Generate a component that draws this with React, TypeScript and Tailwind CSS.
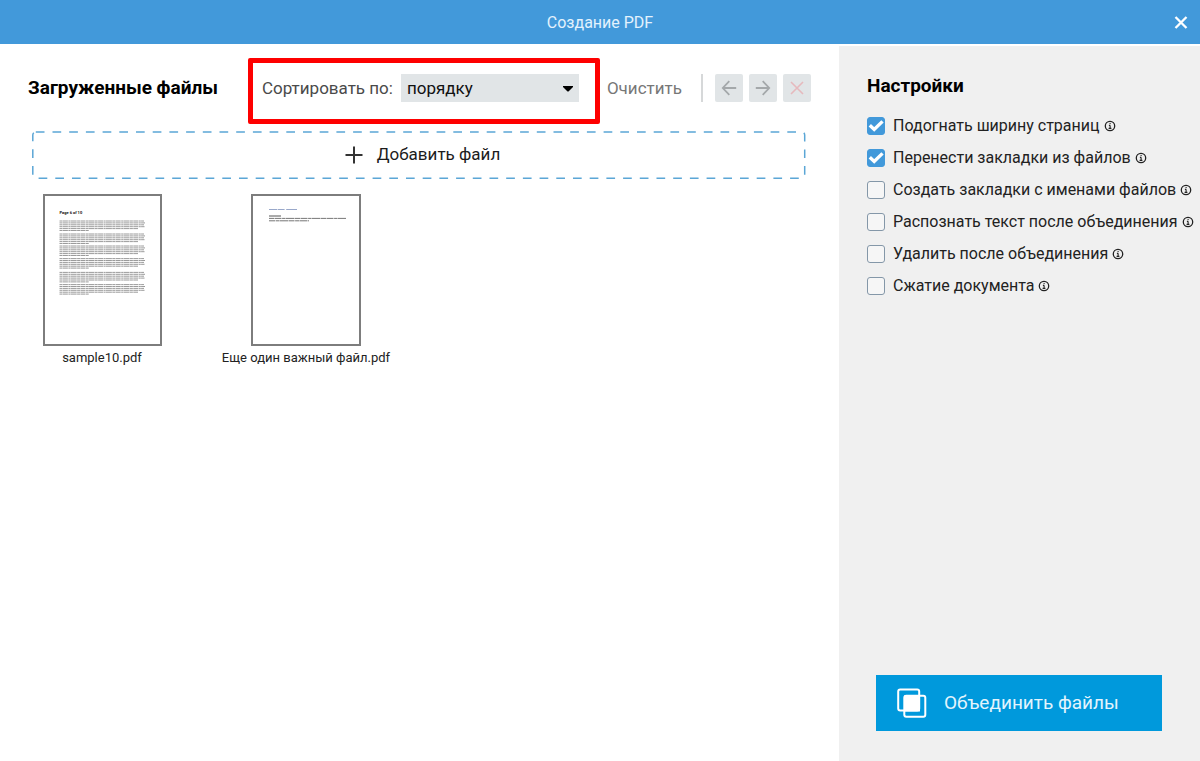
import { useState } from "react";

const SORT_OPTIONS = ["порядку", "имени", "размеру", "дате"];

const SETTINGS = [
  { id: "fit-width", label: "Подогнать ширину страниц", checked: true },
  { id: "move-bookmarks", label: "Перенести закладки из файлов", checked: true },
  { id: "name-bookmarks", label: "Создать закладки с именами файлов", checked: false },
  { id: "ocr", label: "Распознать текст после объединения", checked: false },
  { id: "delete-after", label: "Удалить после объединения", checked: false },
  { id: "compress", label: "Сжатие документа", checked: false },
];

function InfoIcon() {
  return (
    <svg className="size-3 shrink-0" viewBox="0 0 12 12" fill="none" stroke="#222" aria-hidden="true">
      <circle cx="6" cy="6" r="4.7" strokeWidth="1.3" />
      <path d="M6.1 5.2V8.6M4.9 5.4H6.1M4.6 8.4H7.4" strokeWidth="1.1" />
      <circle cx="6.1" cy="3.6" r="0.7" fill="#222" stroke="none" />
    </svg>
  );
}

function ArrowIcon({ flip }: { flip?: boolean }) {
  return (
    <svg
      className={flip ? "size-4 rotate-180" : "size-4"}
      viewBox="0 0 16 16" fill="none" stroke="#a4a8aa" strokeWidth="1.8" aria-hidden="true"
    >
      <path d="M15.2 8H2M8.3 1.2L1.8 8L8.3 14.8" />
    </svg>
  );
}

// Two overlapping sheets with the shared area filled
function MergeIcon() {
  return (
    <svg className="size-8" viewBox="0 0 32 32" fill="none" stroke="#fff" strokeWidth="2" aria-hidden="true">
      <rect x="2.2" y="2.5" width="21" height="21" rx="2" />
      <rect x="8.3" y="8.8" width="21" height="21" rx="2" />
      <rect x="9" y="9.5" width="14" height="14" fill="#fff" />
    </svg>
  );
}

// Page filled with six paragraphs
function TextPage() {
  const tops = [25, 38, 50, 62.6, 76.4, 88.6];
  return (
    <svg className="h-[148px] w-[115px]" viewBox="0 0 115 148" aria-hidden="true">
      <text x="14.5" y="18" fontSize="4" fontWeight="700" fontFamily="Roboto" fill="#111">Page 6 of 10</text>
      {tops.map((y) => (
        <g key={y} stroke="#555" strokeWidth="0.9" opacity="0.65" strokeDasharray="3 .4 5 .5 2 .3 6 .4">
          <path d={`M14.5 ${y}H99M14.5 ${y + 1.9}H100`} />
          <path d={`M14.5 ${y + 3.8}H99M14.5 ${y + 5.7}H99.5`} />
          <path d={`M14.5 ${y + 7.6}H93M14.5 ${y + 9.5}H44`} />
        </g>
      ))}
    </svg>
  );
}

function ShortPage() {
  return (
    <svg className="h-[148px] w-[106px]" viewBox="0 0 106 148" fill="none" aria-hidden="true">
      <path d="M16 13.5H44" stroke="#7f92bd" strokeWidth="1.2" strokeDasharray="8 .6 7 1.6 12" opacity="0.8" />
      <path d="M16 20H28" stroke="#444" strokeWidth="0.9" />
      <path d="M16 22.4H93" stroke="#666" strokeWidth="0.9" strokeDasharray="5 .5 7 .6 3 .4 9 .5" />
      <path d="M16 24.8H56" stroke="#666" strokeWidth="0.9" strokeDasharray="6 .6 4 .4 8 .5" />
    </svg>
  );
}

const FILES = [
  { name: "sample10.pdf", preview: <TextPage /> },
  { name: "Еще один важный файл.pdf", preview: <ShortPage /> },
];

export default function App() {
  const [sort, setSort] = useState(SORT_OPTIONS[0]);
  const [checked, setChecked] = useState<Record<string, boolean>>(
    Object.fromEntries(SETTINGS.map((s) => [s.id, s.checked]))
  );

  return (
    <div className="flex min-h-screen flex-col bg-white font-['Roboto',sans-serif] text-black">
      {/* Title bar */}
      <header className="grid h-11 grid-cols-[1fr_auto_1fr] items-center bg-[#4299da] pt-0.5">
        <h1 className="col-start-2 text-base text-[#e3f2fd]">Создание PDF</h1>
        <button type="button" aria-label="Закрыть" className="mr-2.5 justify-self-end p-px text-white">
          <svg className="size-4" viewBox="0 0 16 16" stroke="currentColor" strokeWidth="2.3" aria-hidden="true">
            <path d="M2.5 2L13.5 13M13.5 2L2.5 13" />
          </svg>
        </button>
      </header>

      <div className="flex flex-1 pt-0.5">
        <main className="min-w-0 flex-1">
          {/* Toolbar */}
          <div className="flex items-center pt-7 pr-7 pl-7">
            <h2 className="text-[19px] leading-7 font-bold whitespace-nowrap">Загруженные файлы</h2>
            <div className="relative ml-11 flex items-center gap-2">
              <label htmlFor="sort" className="text-[17px] leading-7 whitespace-nowrap text-[#4a4a4a]">Сортировать по:</label>
              <div className="relative">
                <select
                  id="sort"
                  value={sort}
                  onChange={(e) => setSort(e.target.value)}
                  className="block h-7 w-[178px] appearance-none bg-[#e1e5e7] pl-1.5 text-[17px] leading-7 text-[#111]"
                >
                  {SORT_OPTIONS.map((o) => <option key={o}>{o}</option>)}
                </select>
                <svg className="pointer-events-none absolute top-3 right-1.5 h-1.5 w-2.5" viewBox="0 0 10 6" aria-hidden="true">
                  <path d="M0 0H10V1L5.5 5.5H4.5L0 1Z" fill="#000" />
                </svg>
              </div>
              <div className="pointer-events-none absolute -top-4 -right-[21px] -bottom-5.5 -left-3.5 rounded-xs border-5 border-[#fe0000]" />
            </div>
            <button type="button" className="ml-7 text-[17px] leading-7 text-[#777]">Очистить</button>
            <div className="ml-auto flex items-center gap-1.5">
              <span className="mr-1.5 h-7 w-0.5 bg-[#d6d8d9]" />
              <button type="button" aria-label="Назад" className="grid size-7 place-items-center rounded-xs bg-[#e1e5e7]"><ArrowIcon /></button>
              <button type="button" aria-label="Вперед" className="grid size-7 place-items-center rounded-xs bg-[#e1e5e7]"><ArrowIcon flip /></button>
              <button type="button" aria-label="Удалить" className="grid size-7 place-items-center rounded-xs bg-[#e1e5e7]">
                <svg className="size-4" viewBox="0 0 16 16" stroke="#e6b9bd" strokeWidth="1.6" aria-hidden="true">
                  <path d="M2 2L14 14M14 2L2 14" />
                </svg>
              </button>
            </div>
          </div>

          {/* Drop zone */}
          <div className="mt-[29px] mr-8 ml-8">
            <button type="button" className="relative flex h-12 w-full items-center justify-center gap-3.5 pl-1.5 text-[17px] text-[#1c1c1c]">
              <svg className="absolute inset-0 size-full overflow-visible" fill="none" aria-hidden="true">
                <rect x="0.8" y="1" width="99.6%" height="46.3" rx="3" stroke="#5ba6d6" strokeWidth="1.5" strokeDasharray="8.7 8" />
              </svg>
              <svg className="size-[18px]" viewBox="0 0 18 18" stroke="#333" strokeWidth="2" aria-hidden="true">
                <path d="M9 0.5V17.5M0.5 9H17.5" />
              </svg>
              <span>Добавить файл</span>
            </button>
          </div>

          {/* Files */}
          <ul className="mt-[15px] flex flex-wrap">
            {FILES.map((f) => (
              <li key={f.name} className="flex w-51 flex-col items-center">
                <div className="border-2 border-[#7d7d7d] bg-white">{f.preview}</div>
                <p className="mt-0.5 text-[13px] leading-5 text-[#222]">{f.name}</p>
              </li>
            ))}
          </ul>
        </main>

        {/* Settings */}
        <aside className="flex w-[361px] shrink-0 flex-col bg-[#f0f0f0] pt-6 pb-[30px]">
          <h2 className="pl-7 text-[19px] leading-8 font-bold">Настройки</h2>
          <ul className="mt-2 pl-7">
            {SETTINGS.map((s) => (
              <li key={s.id} className="flex h-8 items-center">
                <label htmlFor={s.id} className="flex items-center gap-2 text-base whitespace-nowrap text-[#222]">
                  <span className="relative block size-[18px] shrink-0">
                    <input
                      id={s.id}
                      type="checkbox"
                      checked={checked[s.id]}
                      onChange={(e) => setChecked({ ...checked, [s.id]: e.target.checked })}
                      className="peer block size-[18px] appearance-none rounded-[3px] border border-[#8497a8] bg-[#f6f6f6] checked:border-[#4299da] checked:bg-[#4299da]"
                    />
                    <svg
                      className="pointer-events-none absolute inset-0 hidden size-[18px] peer-checked:block"
                      viewBox="0 0 18 18" fill="none" stroke="#fff" strokeWidth="3.4" aria-hidden="true"
                    >
                      <path d="M2.8 8.3L7.2 12.4L15.5 4.4" />
                    </svg>
                  </span>
                  <span>{s.label}</span>
                </label>
                <span className="ml-1"><InfoIcon /></span>
              </li>
            ))}
          </ul>
          <button type="button" className="mt-auto mr-[38px] ml-[37px] flex h-14 items-center gap-4 bg-[#0099dc] pl-5 text-[19px] text-[#e3f4fd]">
            <MergeIcon />
            <span>Объединить файлы</span>
          </button>
        </aside>
      </div>
    </div>
  );
}
